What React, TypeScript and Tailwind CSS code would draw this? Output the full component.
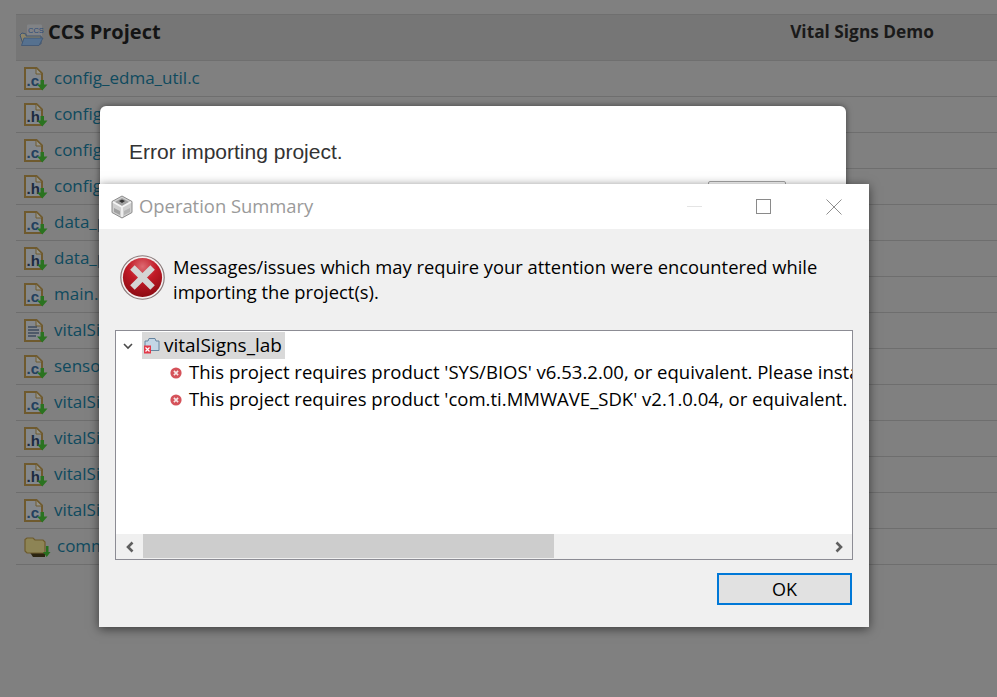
import React from 'react';

const FileIcon = ({ letter }: { letter: 'c' | 'h' | 'doc' }) => (
  <svg width="24" height="24" viewBox="0 0 24 24" className="shrink-0">
    <path d="M1 1H12.5L18 6.5V22H1Z" fill="#84888c" stroke="#6f5a2e" strokeWidth="2" />
    <path d="M12 1.5V7H17.5" fill="#92928a" stroke="#6f5a2e" strokeWidth="1" />
    {letter === 'doc' ? (
      <path d="M4 8H13M4 11H15M4 14H15M4 17H12" stroke="#3d4a5c" strokeWidth="1.4" />
    ) : (
      <text x="2.5" y="18.5" fontSize="15" fontWeight="700" fontFamily="Liberation Sans, sans-serif" fill={letter === 'c' ? '#23405e' : '#1b2a40'}>
        .{letter}
      </text>
    )}
    <path d="M16.5 13H20V17.5H23.5L18.3 23.5L13 17.5H16.5Z" fill="#2a7320" />
  </svg>
);

const FolderIcon = () => (
  <svg width="27" height="24" viewBox="0 0 27 24" className="shrink-0">
    <path d="M5 16H21V22H9Z" fill="#2b2410" />
    <path d="M1 4.5L3 3H9L11 5H19L21 7V18H3L1 16Z" fill="#8d8455" stroke="#6d5a2c" strokeWidth="1.2" />
    <path d="M22 11H24.5V17H26.5L22.7 22L19 17H22Z" fill="#27701f" />
  </svg>
);

const ProjectIcon = () => (
  <svg width="25" height="23" viewBox="0 0 25 23" className="mt-[8px] shrink-0">
    <rect x="8" y="0.5" width="15" height="12" rx="1" fill="#818386" />
    <text x="9" y="9" fontSize="7.5" fontFamily="Liberation Sans, sans-serif" fill="#2c4a78">CCS</text>
    <path d="M1 11L3 9L7 10V12H22L22 20H4Z" fill="#8d856a" stroke="#3e5573" strokeWidth="1" />
    <path d="M5 14H24L20 21.5H2.5Z" fill="#56718f" stroke="#3e5573" strokeWidth="0.8" />
  </svg>
);

const CubeIcon = () => (
  <svg width="24" height="24" viewBox="0 0 24 24" className="shrink-0">
    <path d="M12 1L22 6.5V17.5L12 23L2 17.5V6.5Z" fill="#cfcfcf" stroke="#8c8c8c" strokeWidth="1" />
    <path d="M12 3L19 7L12 11L5 7Z" fill="#a0a0a0" />
    <path d="M9 6L12 4.5L15 6L12 8Z" fill="#333333" />
    <path d="M12 12V22M3 7L12 12L21 7" stroke="#f4f4f4" strokeWidth="1.6" fill="none" />
    <path d="M4 13L10 16V20L4 17Z" fill="#a0a0a0" />
    <path d="M20 13L14 16V20L20 17Z" fill="#b4b4b4" />
  </svg>
);

const BigErrorIcon = () => (
  <svg width="45" height="45" viewBox="0 0 46 46" className="mt-[2px] shrink-0">
    <defs>
      <radialGradient id="errFill" cx="50%" cy="22%" r="80%">
        <stop offset="0%" stopColor="#dd6a72" />
        <stop offset="45%" stopColor="#c11a26" />
        <stop offset="100%" stopColor="#8a0a12" />
      </radialGradient>
    </defs>
    <circle cx="23" cy="23" r="22.2" fill="#f4eeee" stroke="#8a7a7a" strokeWidth="1.2" />
    <circle cx="23" cy="23" r="20" fill="url(#errFill)" />
    <path d="M15 15L31 31M31 15L15 31" stroke="#d4d4d4" strokeWidth="6.5" strokeLinecap="square" />
  </svg>
);

const SmallErrorIcon = () => (
  <svg width="12" height="12" viewBox="0 0 12 12" className="shrink-0">
    <circle cx="6" cy="6" r="5.6" fill="#d5525a" />
    <path d="M3.9 3.9L8.1 8.1M8.1 3.9L3.9 8.1" stroke="#f6e6e6" strokeWidth="1.6" />
  </svg>
);

const TreeProjectIcon = () => (
  <svg width="18" height="18" viewBox="0 0 18 18" className="shrink-0">
    <path d="M3 4H6L7 1.5H13L14 4H17V13.5H3Z" fill="#c3d6e6" stroke="#66849f" strokeWidth="1" />
    <rect x="2" y="8.5" width="7" height="8" fill="#e23a4a" />
    <path d="M3.5 10.5L7.5 14.5M7.5 10.5L3.5 14.5" stroke="#ffffff" strokeWidth="1.2" />
  </svg>
);

const Chevron = ({ dir }: { dir: 'left' | 'right' }) => (
  <svg width="10" height="12" viewBox="0 0 10 12">
    <path d={dir === 'left' ? 'M7.5 1.5L3 6L7.5 10.5' : 'M2.5 1.5L7 6L2.5 10.5'} fill="none" stroke="#5f5f5f" strokeWidth="2.6" />
  </svg>
);

const files: { icon: 'c' | 'h' | 'doc' | 'folder'; name: string }[] = [
  { icon: 'c', name: 'config_edma_util.c' },
  { icon: 'h', name: 'config_edma_util.h' },
  { icon: 'c', name: 'config_hwa_util.c' },
  { icon: 'h', name: 'config_hwa_util.h' },
  { icon: 'c', name: 'data_path.c' },
  { icon: 'h', name: 'data_path.h' },
  { icon: 'c', name: 'main.c' },
  { icon: 'doc', name: 'vitalSigns.cfg' },
  { icon: 'c', name: 'sensor_mgmt.c' },
  { icon: 'c', name: 'vitalSigns.c' },
  { icon: 'h', name: 'vitalSigns.h' },
  { icon: 'h', name: 'vitalSigns_dss.h' },
  { icon: 'c', name: 'vitalSigns_dss.c' },
  { icon: 'folder', name: 'common' },
];

const errors = [
  "This project requires product 'SYS/BIOS' v6.53.2.00, or equivalent. Please install it and try again.",
  "This project requires product 'com.ti.MMWAVE_SDK' v2.1.0.04, or equivalent. Please install it and try again.",
];

export default function App() {
  return (
    <div className="relative h-[697px] w-[997px] overflow-hidden bg-[#808080] pt-[14px] pl-[16px] font-['Open_Sans',sans-serif]">
      {/* Page behind the dialogs */}
      <div className="flex h-[47px] items-center justify-between border-y border-[#6f6f6f] bg-[#767676] pr-[63px] pb-[12px] pl-[3px]">
        <div className="flex items-center gap-[4px]">
          <ProjectIcon />
          <span className="text-[20px] font-bold text-[#141414]">CCS Project</span>
        </div>
        <span className="text-[17.3px] font-bold text-[#1a1a1a]">Vital Signs Demo</span>
      </div>
      <div>
        {files.map((f) => (
          <div key={f.name} className="flex h-[36px] items-center gap-[6px] border-b border-[#6e6e6e] pl-[8px]">
            {f.icon === 'folder' ? <FolderIcon /> : <FileIcon letter={f.icon} />}
            <span className="-mt-[2px] text-[17px] text-[#0f4a5e]">{f.name}</span>
          </div>
        ))}
      </div>

      {/* Dialog behind */}
      <div className="absolute top-[106px] left-[100px] h-[90px] w-[746px] rounded-t-[6px] bg-white pt-[30px] pl-[29px] shadow-[0_0_6px_rgba(0,0,0,0.5)]">
        <div className="font-['Liberation_Sans',sans-serif] text-[21px] text-[#333333]">Error importing project.</div>
        <div className="absolute top-[75px] left-[608px] h-[20px] w-[78px] rounded-[2px] border border-[#a8a8a8]" />
      </div>

      {/* Operation Summary window */}
      <div className="absolute top-[184px] left-[99px] flex h-[443px] w-[770px] flex-col bg-[#f0f0f0] shadow-[0_2px_10px_rgba(0,0,0,0.55)]">
        <div className="flex h-[45px] shrink-0 items-center bg-white pl-[11px]">
          <CubeIcon />
          <span className="-mt-[2px] ml-[5px] text-[18.4px] text-[#9a9a9a]">Operation Summary</span>
          <div className="ml-auto flex items-center">
            <div className="mr-[54px] ml-[1px] h-px w-[15px] bg-[#e4e4e4]" />
            <div className="mr-[55px] size-[15px] border border-[#8a8a8a]" />
            <svg width="16" height="16" viewBox="0 0 16 16" className="mr-[27px]">
              <path d="M0.5 0.5L15.5 15.5M15.5 0.5L0.5 15.5" stroke="#8f8f8f" strokeWidth="1" />
            </svg>
          </div>
        </div>

        <div className="flex items-start pt-[24px] pl-[21px]">
          <BigErrorIcon />
          <p className="mt-[1px] ml-[8px] text-[18.35px] leading-[25px] text-black">
            Messages/issues which may require your attention were encountered while
            <br />
            importing the project(s).
          </p>
        </div>

        <div className="mt-[26px] ml-[16px] flex h-[230px] w-[738px] flex-col border border-[#8c8c94] bg-white">
          <div className="flex-1 overflow-hidden pt-px">
            <div className="flex h-[27px] items-center pl-[6px]">
              <svg width="12" height="12" viewBox="0 0 12 12" className="mr-[8px]">
                <path d="M2 4L6 8L10 4" fill="none" stroke="#4a4a4a" strokeWidth="1.6" />
              </svg>
              <div className="flex h-[27px] items-center gap-[4px] bg-[#d9d9d9] pr-[3px]">
                <TreeProjectIcon />
                <span className="text-[19px] text-black">vitalSigns_lab</span>
              </div>
            </div>
            {errors.map((e) => (
              <div key={e} className="flex h-[27px] items-center gap-[7px] pl-[54px] whitespace-nowrap">
                <SmallErrorIcon />
                <span className="-mt-[2px] text-[18.55px] text-black">{e}</span>
              </div>
            ))}
          </div>
          <div className="flex h-[25px] shrink-0 items-center bg-[#f0f0f0]">
            <div className="flex w-[27px] justify-center"><Chevron dir="left" /></div>
            <div className="h-[24px] w-[411px] self-start bg-[#cdcdcd]" />
            <div className="ml-auto flex w-[27px] justify-center"><Chevron dir="right" /></div>
          </div>
        </div>

        <div className="mt-[13px] flex justify-end pr-[17px]">
          <button className="h-[32px] w-[135px] border-2 border-[#0078d7] bg-[#e1e1e1] text-[18px] text-black">OK</button>
        </div>
      </div>
    </div>
  );
}
